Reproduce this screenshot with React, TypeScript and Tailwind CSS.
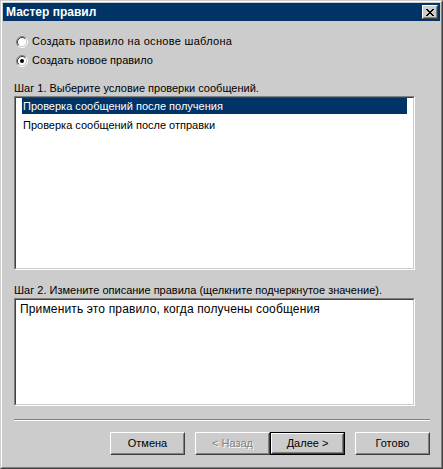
import React from "react";

const font = { fontFamily: '"Liberation Sans", Arial, sans-serif' };

function Radio({ checked }: { checked?: boolean }) {
  return (
    <svg width="12" height="12" viewBox="0 0 12 12" className="shrink-0">
      <circle cx="6" cy="6" r="4.5" fill="#ffffff" />
      <path d="M2.11 9.89 A5.5 5.5 0 0 1 9.89 2.11" stroke="#808080" strokeWidth="1" fill="none" />
      <path d="M9.89 2.11 A5.5 5.5 0 0 1 2.11 9.89" stroke="#ffffff" strokeWidth="1" fill="none" />
      <path d="M2.82 9.18 A4.5 4.5 0 0 1 9.18 2.82" stroke="#404040" strokeWidth="1" fill="none" />
      <path d="M9.18 2.82 A4.5 4.5 0 0 1 2.82 9.18" stroke="#cccccc" strokeWidth="1" fill="none" />
      {checked && <circle cx="6" cy="6" r="2" fill="#000000" />}
    </svg>
  );
}

function CloseGlyph() {
  const rows = [
    "XX....XX",
    ".XX..XX.",
    "..XXXX..",
    "...XX...",
    "..XXXX..",
    ".XX..XX.",
    "XX....XX",
  ];
  return (
    <svg width="8" height="7" viewBox="0 0 8 7" shapeRendering="crispEdges">
      {rows.map((r, y) =>
        r.split("").map((c, x) =>
          c === "X" ? <rect key={`${x}-${y}`} x={x} y={y} width="1" height="1" fill="#000" /> : null
        )
      )}
    </svg>
  );
}

function Raised({ children, className = "" }: { children: React.ReactNode; className?: string }) {
  return (
    <div className={`border border-t-white border-l-white border-r-[#404040] border-b-[#404040] ${className}`}>
      <div className="w-full h-full border border-t-[#cccccc] border-l-[#cccccc] border-r-[#808080] border-b-[#808080] flex items-center justify-center">
        {children}
      </div>
    </div>
  );
}

function Sunken({ children, className = "" }: { children: React.ReactNode; className?: string }) {
  return (
    <div className={`border border-t-[#808080] border-l-[#808080] border-r-white border-b-white ${className}`}>
      <div className="w-full h-full border border-t-[#404040] border-l-[#404040] border-r-[#cccccc] border-b-[#cccccc] bg-white">
        {children}
      </div>
    </div>
  );
}

function Button({ label, disabled, isDefault }: { label: string; disabled?: boolean; isDefault?: boolean }) {
  const text = (
    <span
      className={`text-[11px] leading-none ${disabled ? "text-[#808080]" : "text-black"}`}
      style={disabled ? { textShadow: "1px 1px 0 #ffffff" } : undefined}
    >
      {label}
    </span>
  );
  if (isDefault) {
    return (
      <div className="w-[75px] h-[23px] border border-black">
        <Raised className="w-full h-full">{text}</Raised>
      </div>
    );
  }
  return <Raised className="w-[75px] h-[23px]">{text}</Raised>;
}

export default function App() {
  return (
    <div className="w-[443px] h-[469px] bg-[#cccccc] border border-t-[#cccccc] border-l-[#cccccc] border-r-[#404040] border-b-[#404040]" style={font}>
      <div className="w-full h-full border border-t-white border-l-white border-r-[#808080] border-b-[#808080] p-[1px] flex flex-col">
        <div className="h-[18px] bg-[#003366] flex items-center justify-between pl-[3px] pr-[2px]">
          <span className="text-white font-bold text-[12px] leading-none">Мастер правил</span>
          <Raised className="w-[16px] h-[14px] bg-[#cccccc]">
            <CloseGlyph />
          </Raised>
        </div>
        <div className="flex flex-col pl-[11px] pt-[11px] text-[11px] text-black">
          <div className="h-[19px] flex items-center pl-[2px]">
            <Radio />
            <span className="ml-[4px] tracking-[0.3px]">Создать правило на основе шаблона</span>
          </div>
          <div className="h-[19px] flex items-center pl-[2px]">
            <Radio checked />
            <span className="ml-[4px]">Создать новое правило</span>
          </div>
          <div className="h-[14px] mt-[11px] leading-[14px]">Шаг 1. Выберите условие проверки сообщений.</div>
          <Sunken className="w-[401px] h-[174px] mt-[1px]">
            <div className="flex flex-col gap-[3px] px-[6px]">
              <div className="h-[16px] bg-[#003366] text-white flex items-center pl-[1px]">
                Проверка сообщений после получения
              </div>
              <div className="h-[16px] flex items-center pl-[1px]">Проверка сообщений после отправки</div>
            </div>
          </Sunken>
          <div className="h-[14px] mt-[13px] leading-[14px]">
            Шаг 2. Измените описание правила (щелкните подчеркнутое значение).
          </div>
          <Sunken className="w-[401px] h-[108px] mt-[1px]">
            <div className="h-[16px] mt-[1px] pl-[4px] flex items-center text-[12px] tracking-[0.15px]">
              Применить это правило, когда получены сообщения
            </div>
          </Sunken>
          <div className="w-[416px] mt-[13px] border-t border-t-[#808080] border-b border-b-white" />
          <div className="w-[416px] mt-[11px] flex justify-end">
            <Button label="Отмена" />
            <div className="w-[10px]" />
            <Button label="< Назад" disabled />
            <Button label="Далее >" isDefault />
            <div className="w-[10px]" />
            <Button label="Готово" />
          </div>
        </div>
      </div>
    </div>
  );
}
